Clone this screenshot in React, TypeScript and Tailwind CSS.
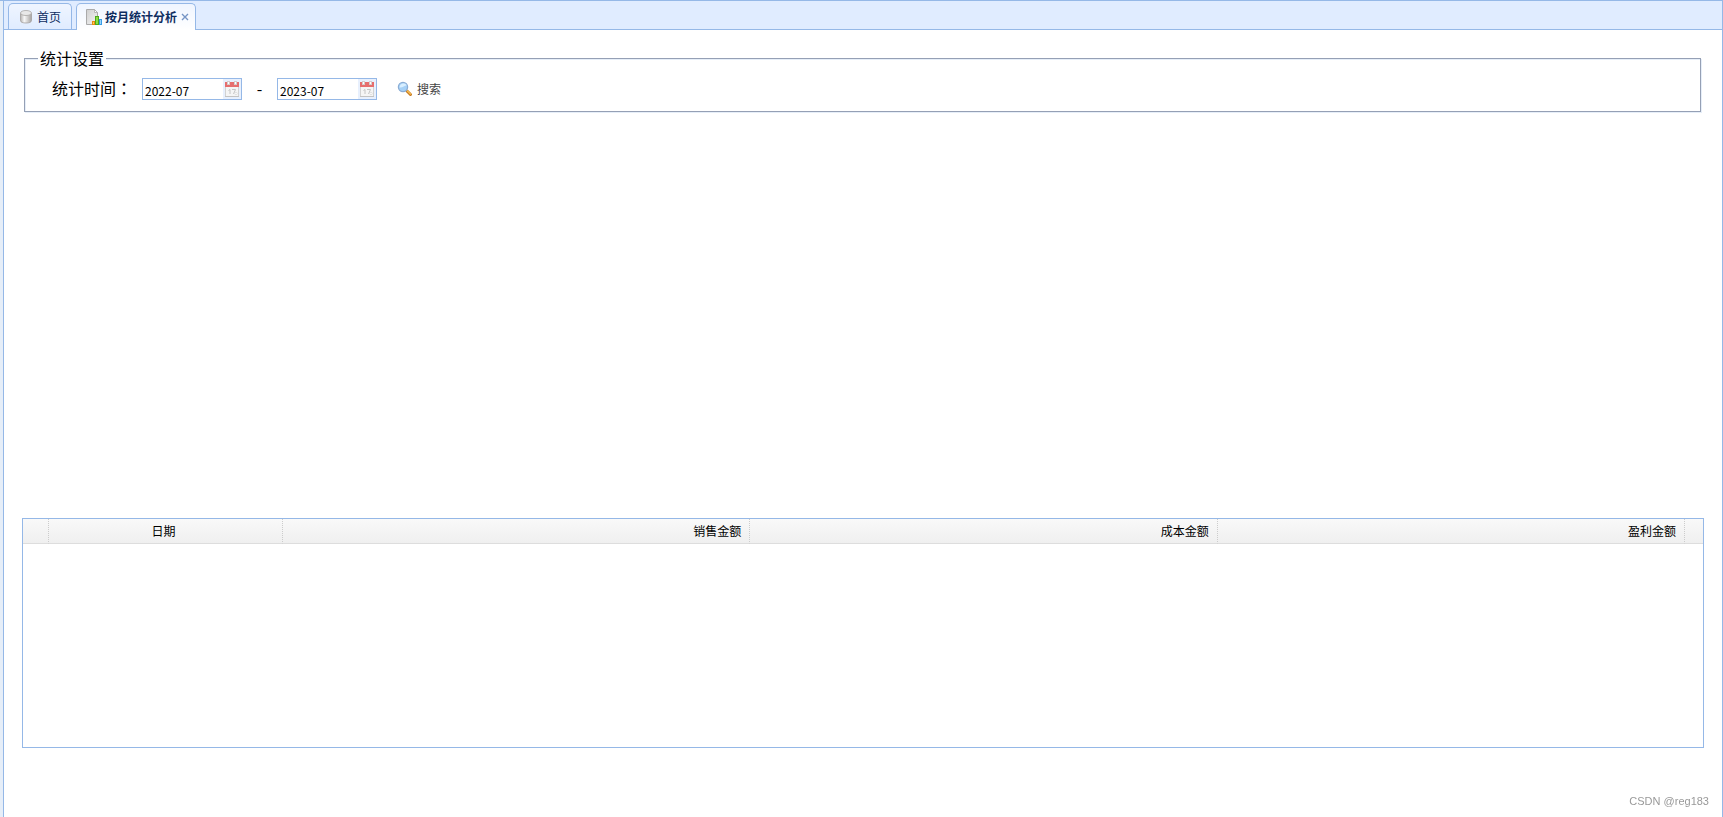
import { useState } from "react";

const columns = [
  { field: "sales", title: "销售金额" },
  { field: "cost", title: "成本金额" },
  { field: "profit", title: "盈利金额" },
];

function DatabaseIcon() {
  return (
    <svg className="h-4 w-4" viewBox="0 0 16 16" aria-hidden="true">
      <defs>
        <linearGradient id="db-body">
          <stop offset="0" stopColor="#b5b2b0" />
          <stop offset=".35" stopColor="#f7f7f7" />
          <stop offset="1" stopColor="#a5a2a0" />
        </linearGradient>
      </defs>
      <path
        d="M2.500 4.500v7c0 1.800 2.400 2.500 5.500 2.500s5.500-.7 5.500-2.500v-7z"
        fill="url(#db-body)"
        stroke="#a3a09e"
        strokeWidth=".8"
      />
      <ellipse cx="8" cy="4" rx="5.500" ry="2.500" fill="#e8e8e8" stroke="#aaa7a5" strokeWidth=".8" />
    </svg>
  );
}

function ReportIcon() {
  return (
    <svg className="h-4 w-4" viewBox="0 0 16 16" aria-hidden="true">
      <defs>
        <linearGradient id="report-page" x2="1" y2="1">
          <stop offset="0" stopColor="#cfcfcf" />
          <stop offset="1" stopColor="#f5f5f5" />
        </linearGradient>
      </defs>
      <path d="M.5.500h8l3 3v12H.5z" fill="url(#report-page)" stroke="#aaa" />
      <path d="M8.500.500v3h3z" fill="#fff" stroke="#aaa" strokeWidth=".8" />
      <path d="M6 12h3v4H6z" fill="#e88a10" />
      <path d="M7 13h1v2H7z" fill="#ffd05a" />
      <path d="M9 7h4v9H9z" fill="#4ca81c" />
      <path d="M10 8h2v7h-2z" fill="#8bdd45" />
      <path d="M13 10h3v6h-3z" fill="#379de8" />
      <path d="M14 11h1v4h-1z" fill="#9bd5fb" />
    </svg>
  );
}

function CalendarIcon() {
  return (
    <svg className="h-4 w-4" viewBox="0 0 16 16" aria-hidden="true">
      <path d="M1.500 5h13v10.500h-13z" fill="#f5f5f5" stroke="#d2d2d2" />
      <path d="M1 1h14v5H1z" fill="#e66e6e" />
      <path d="M3 0h3v4H3zM10 0h3v4h-3z" fill="#d5cccc" />
      <path d="M4 1h1v2H4zM11 1h1v2h-1z" fill="#fff" />
      <path d="M4.500 9.500 6 8.500V13M8 8.500h3.500L9.500 13" fill="none" stroke="#c4c4c4" />
      <circle cx="12" cy="12.500" r="1.200" fill="#fff" stroke="#d5d5d5" strokeWidth=".7" />
      <path d="M1 15.500h14" stroke="#c3c3c3" />
    </svg>
  );
}

function SearchIcon() {
  return (
    <svg className="h-4 w-4" viewBox="0 0 16 16" aria-hidden="true">
      <path d="m10 10 3.500 3.500" stroke="#c77b22" strokeWidth="3" strokeLinecap="round" />
      <path d="m10.500 10 3 3" stroke="#f6bd50" strokeWidth="1.300" strokeLinecap="round" />
      <circle cx="6" cy="6" r="4.600" fill="#a6d1f7" stroke="#8badd5" strokeWidth="1.300" />
      <path d="M2.500 6.500C2.500 4 4.500 2.500 6.500 2.500s3 1 3 2C7.500 4.500 5.500 7 2.500 6.500z" fill="#d9efff" />
    </svg>
  );
}

function MonthBox({ label, initial }: { label: string; initial: string }) {
  const [value, setValue] = useState(initial);

  return (
    <span className="flex h-[22px] w-[100px] border border-[#95B8E7] bg-white">
      <input
        type="text"
        aria-label={label}
        value={value}
        onChange={(e) => setValue(e.target.value)}
        className="w-20 min-w-0 px-0.5 pt-1 text-xs leading-4 outline-none"
      />
      <button
        type="button"
        aria-label={`选择${label}`}
        className="flex w-[18px] items-center justify-center bg-[#E8F0FD]"
      >
        <CalendarIcon />
      </button>
    </span>
  );
}

export default function App() {
  return (
    <div className="flex min-h-screen flex-col border-t border-r border-[#95B8E7] bg-[#E6EEF8] pl-[3px] font-['Noto_Sans_CJK_SC',sans-serif] text-black">
      {/* Tabs */}
      <nav className="flex h-[29px] items-end gap-1 border-b border-l border-[#95B8E7] bg-[#E0ECFF] pl-1 text-xs text-[#0E2D5F]">
        <button
          type="button"
          className="flex h-[26px] items-center gap-[3px] rounded-t-[5px] border border-b-0 border-[#95B8E7] bg-linear-to-b from-[#EFF5FF] to-[#E0ECFF] pr-2.5 pl-[9px]"
        >
          <DatabaseIcon />
          首页
        </button>
        <div className="-mb-px flex h-[27px] items-center rounded-t-[5px] border border-b-0 border-[#95B8E7] bg-linear-to-b from-[#EFF5FF] to-white pr-1.5 pb-px pl-[9px]">
          <button type="button" className="flex items-center gap-[3px] font-bold">
            <ReportIcon />
            按月统计分析
          </button>
          <button type="button" aria-label="关闭" className="ml-1 flex h-4 w-2 items-center justify-center">
            <svg className="h-2 w-2" viewBox="0 0 8 8" aria-hidden="true">
              <path d="m1 1 6 6M7 1 1 7" stroke="#7695c5" strokeWidth="1.400" />
            </svg>
          </button>
        </div>
      </nav>

      <main className="flex-1 border-l border-[#95B8E7] bg-white px-[18px] pt-4">
        {/* Filter */}
        <fieldset className="mr-[3px] ml-0.5 h-[66px] border border-[#95A0B5] px-[13px] pt-1 shadow-[1px_1px_0_#E6EEF8,inset_1px_1px_0_#E6EEF8]">
          <legend className="bg-white px-0.5 text-base leading-6">统计设置</legend>
          <div className="flex items-end pt-0.5 pl-3.5">
            <span className="text-base leading-6">
              统计时间<span className="font-['Noto_Sans_CJK_TC',sans-serif]">：</span>
            </span>
            <span className="ml-2.5 flex items-end">
              <MonthBox label="开始月份" initial="2022-07" />
              <span className="w-[35px] text-center text-base leading-6">-</span>
              <MonthBox label="结束月份" initial="2023-07" />
            </span>
            <button type="button" className="ml-5 flex h-[22px] items-center gap-1 text-xs text-[#444]">
              <SearchIcon />
              搜索
            </button>
          </div>
        </fieldset>

        <div className="h-[406px]" />

        {/* Monthly totals */}
        <div className="h-[230px] border border-[#95B8E7] bg-white">
          <table className="w-full table-fixed border-separate border-spacing-0 text-xs">
            <colgroup>
              <col className="w-[26px]" />
              <col className="w-[234px]" />
              <col />
              <col />
              <col />
              <col className="w-[18px]" />
            </colgroup>
            <thead>
              <tr className="h-[25px] bg-linear-to-b from-[#F9F9F9] to-[#EFEFEF]">
                <td className="border-r border-b border-r-[#ccc] border-b-[#ddd] [border-right-style:dotted]" />
                <th className="border-r border-b border-r-[#ccc] border-b-[#ddd] pr-1 font-normal [border-right-style:dotted]">
                  日期
                </th>
                {columns.map((col) => (
                  <th
                    key={col.field}
                    className="border-r border-b border-r-[#ccc] border-b-[#ddd] pr-2 text-right font-normal [border-right-style:dotted]"
                  >
                    {col.title}
                  </th>
                ))}
                <td className="border-b border-[#ddd]" />
              </tr>
            </thead>
          </table>
        </div>
      </main>

      <span className="fixed right-3.5 bottom-2 font-['Liberation_Sans',sans-serif] text-[11px] leading-4 text-[#999]">
        CSDN @reg183
      </span>
    </div>
  );
}
